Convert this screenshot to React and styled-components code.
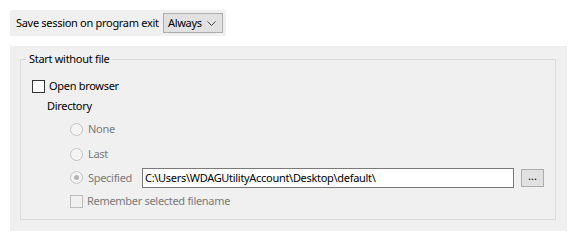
import React from "react";
import styled, { createGlobalStyle } from "styled-components";

const Global = createGlobalStyle`
  html, body { margin: 0; padding: 0; background: #ffffff; }
  body { font-family: "Noto Sans", "Open Sans", sans-serif; font-size: 11px; color: #000; }
`;

const Page = styled.div`
  display: flex;
  flex-direction: column;
  align-items: flex-start;
  padding: 10px;
  gap: 10px;
  width: 557px;
`;

const TopBar = styled.div`
  display: flex;
  align-items: center;
  width: 216px;
  height: 26px;
  background: #f0f0f0;
  box-sizing: border-box;
  padding-left: 6px;
`;

const Label = styled.span`
  font-size: 11px;
  letter-spacing: -0.3px;
  line-height: 16px;
  white-space: nowrap;
  flex: none;
  color: ${(p) => (p.$disabled ? "#7a7a7a" : "#000")};
`;

const Combo = styled.div`
  display: flex;
  align-items: center;
  justify-content: space-between;
  box-sizing: border-box;
  width: 60px;
  height: 20px;
  flex: none;
  margin-left: auto;
  margin-right: 3px;
  border: 1px solid #adadad;
  background: #e1e1e1;
  padding: 0 6px 0 4px;
`;

const Panel = styled.div`
  width: 557px;
  height: 185px;
  background: #f0f0f0;
  box-sizing: border-box;
  padding: 5px 11px 11px 10px;
  display: flex;
`;

const Group = styled.fieldset`
  flex: 1;
  margin: 0;
  border: 1px solid #dcdcdc;
  padding: 7px 0 0 0;
  min-width: 0;
  display: flex;
  flex-direction: column;
`;

const Legend = styled.legend`
  margin-left: 6px;
  padding: 0 2px;
  font-size: 11px;
  letter-spacing: -0.3px;
  line-height: 16px;
`;

const Row = styled.div`
  display: flex;
  align-items: center;
  height: ${(p) => p.$h || 20}px;
  margin-top: ${(p) => p.$mt || 0}px;
  padding-left: ${(p) => p.$indent || 0}px;
`;

const Check = styled.span`
  display: inline-block;
  box-sizing: border-box;
  width: 13px;
  height: 13px;
  border: 1px solid ${(p) => (p.$disabled ? "#bcbcbc" : "#333333")};
  background: ${(p) => (p.$disabled ? "#f0f0f0" : "#ffffff")};
  margin-right: 4px;
  flex: none;
`;

const Radio = styled.span`
  display: inline-flex;
  align-items: center;
  justify-content: center;
  box-sizing: border-box;
  width: 13px;
  height: 13px;
  border-radius: 50%;
  border: 1px solid #c4c4c4;
  background: #f4f4f4;
  margin-right: 5px;
  flex: none;
  &::after {
    content: "";
    display: ${(p) => (p.$checked ? "block" : "none")};
    width: 5px;
    height: 5px;
    border-radius: 50%;
    background: #b4b4b4;
  }
`;

const TextBox = styled.div`
  display: flex;
  align-items: center;
  box-sizing: border-box;
  width: 372px;
  height: 20px;
  flex: none;
  margin-left: auto;
  border: 1px solid #7a7a7a;
  background: #ffffff;
  padding-left: 2px;
  font-size: 11px;
  letter-spacing: -0.3px;
  white-space: nowrap;
  overflow: hidden;
`;

const Browse = styled.div`
  display: flex;
  align-items: center;
  justify-content: center;
  box-sizing: border-box;
  width: 23px;
  height: 18px;
  flex: none;
  margin-left: 7px;
  margin-right: 11px;
  border: 1px solid #adadad;
  background: #e1e1e1;
  font-size: 11px;
  line-height: 10px;
  padding-bottom: 3px;
`;

const Chevron = () => (
  <svg width="9" height="5" viewBox="0 0 9 5">
    <path d="M0.5 0.5 L4.5 4.5 L8.5 0.5" fill="none" stroke="#444" strokeWidth="1" />
  </svg>
);

export default function App() {
  return (
    <>
      <Global />
      <Page>
        <TopBar>
          <Label>Save session on program exit</Label>
          <Combo>
            <Label>Always</Label>
            <Chevron />
          </Combo>
        </TopBar>
        <Panel>
          <Group>
            <Legend>Start without file</Legend>
            <Row $mt={2} $indent={11}>
              <Check />
              <Label>Open browser</Label>
            </Row>
            <Row $indent={26}>
              <Label>Directory</Label>
            </Row>
            <Row $mt={3} $indent={49}>
              <Radio />
              <Label $disabled>None</Label>
            </Row>
            <Row $mt={5} $indent={49}>
              <Radio />
              <Label $disabled>Last</Label>
            </Row>
            <Row $mt={3} $h={21} $indent={49}>
              <Radio $checked />
              <Label $disabled>Specified</Label>
              <TextBox>C:\Users\WDAGUtilityAccount\Desktop\default\</TextBox>
              <Browse>...</Browse>
            </Row>
            <Row $mt={3} $indent={49}>
              <Check $disabled />
              <Label $disabled>Remember selected filename</Label>
            </Row>
          </Group>
        </Panel>
      </Page>
    </>
  );
}
